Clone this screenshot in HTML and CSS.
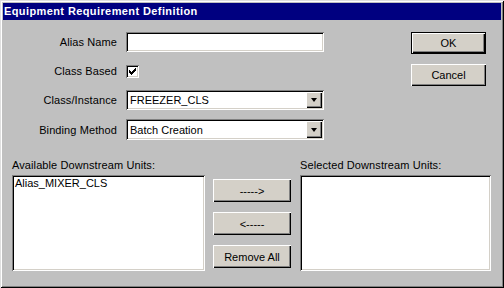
FILE: index.html
```html
<!DOCTYPE html>
<html lang="en">
<head>
  <meta charset="UTF-8" />
  <title>Equipment Requirement Definition</title>
  <link rel="stylesheet" href="styles.css">
</head>
<body>
  <div class="dialog">
    <div class="titlebar">Equipment Requirement Definition</div>

    <div class="top">
      <div class="form">
        <label class="lbl">Alias Name</label>
        <div class="field edit"></div>

        <label class="lbl">Class Based</label>
        <div class="check-cell">
          <span class="checkbox">
            <svg width="7" height="7" viewBox="0 0 7 7" shape-rendering="crispEdges"><path d="M0 2L2 4L7 -1L7 2L2 7L0 5Z" fill="#000"/></svg>
          </span>
        </div>

        <label class="lbl">Class/Instance</label>
        <div class="field combo"><span class="val">FREEZER_CLS</span><span class="drop"><i></i></span></div>

        <label class="lbl">Binding Method</label>
        <div class="field combo"><span class="val">Batch Creation</span><span class="drop"><i></i></span></div>
      </div>

      <div class="actions">
        <button class="btn default">OK</button>
        <button class="btn">Cancel</button>
      </div>
    </div>

    <div class="units">
      <div class="unit-col left">
        <div class="cap">Available Downstream Units:</div>
        <div class="list"><div class="item">Alias_MIXER_CLS</div></div>
      </div>
      <div class="move-col">
        <button class="btn small">-----&gt;</button>
        <button class="btn small">&lt;-----</button>
        <button class="btn small">Remove All</button>
      </div>
      <div class="unit-col right">
        <div class="cap">Selected Downstream Units:</div>
        <div class="list"></div>
      </div>
    </div>
  </div>
</body>
</html>
```

FILE: styles.css
```css
* {
  box-sizing: border-box;
}

body {
  margin: 0;
  font-family: "Liberation Sans", Arial, sans-serif;
  font-size: 11px;
  color: #000;
  background: #c0c0c0;
}

.dialog {
  width: 504px;
  height: 288px;
  padding: 3px;
  background: #c0c0c0;
  box-shadow: inset 1px 1px #dfdfdf, inset -1px -1px #000,
              inset 2px 2px #fff, inset -2px -2px #808080;
}

.titlebar {
  height: 17px;
  line-height: 17px;
  padding-left: 1px;
  background: #000080;
  color: #fff;
  font-weight: bold;
  font-size: 11px;
  letter-spacing: 0.4px;
}

.top {
  display: flex;
  padding: 12px 0 0 9px;
}

.form {
  display: grid;
  grid-template-columns: 105px 198px;
  grid-template-rows: 20px 20px 20px 21px;
  column-gap: 9px;
  row-gap: 9px;
  align-items: center;
}

.lbl {
  text-align: right;
  letter-spacing: 0.1px;
}

.field {
  height: 100%;
  background: #fff;
  box-shadow: inset 1px 1px #808080, inset -1px -1px #fff,
              inset 2px 2px #000, inset -2px -2px #d4d0c8;
}

.check-cell {
  display: flex;
  align-items: center;
}

.checkbox {
  width: 13px;
  height: 13px;
  display: flex;
  align-items: center;
  justify-content: center;
  background: #fff;
  box-shadow: inset 1px 1px #808080, inset -1px -1px #fff,
              inset 2px 2px #000, inset -2px -2px #d4d0c8;
}

.checkbox svg {
  display: block;
}

.combo {
  display: flex;
  align-items: center;
  padding: 2px;
}

.combo .val {
  flex: 1;
  padding-left: 2px;
}

.drop {
  width: 16px;
  height: 100%;
  display: flex;
  align-items: center;
  justify-content: center;
  background: #d4d0c8;
  box-shadow: inset 1px 1px #fff, inset -1px -1px #000, inset -2px -2px #808080;
}

.drop i {
  width: 0;
  height: 0;
  border-left: 3.5px solid transparent;
  border-right: 3.5px solid transparent;
  border-top: 4px solid #000;
}

.actions {
  display: flex;
  flex-direction: column;
  gap: 10px;
  margin-left: 87px;
}

.btn {
  width: 75px;
  height: 22px;
  padding: 0;
  border: none;
  font-family: inherit;
  font-size: 11px;
  color: #000;
  background: #d4d0c8;
  box-shadow: inset 1px 1px #fff, inset -1px -1px #000, inset -2px -2px #808080;
}

.btn.default {
  box-shadow: inset 0 0 0 1px #000, inset 2px 2px #fff,
              inset -2px -2px #000, inset -3px -3px #808080;
}

.units {
  display: flex;
  padding: 19px 0 0 9px;
}

.unit-col.left {
  width: 193px;
}

.unit-col.right {
  width: 191px;
}

.cap {
  height: 13px;
  line-height: 13px;
  margin-bottom: 3px;
  letter-spacing: 0.1px;
}

.list {
  height: 96px;
  padding: 2px 3px;
  background: #fff;
  box-shadow: inset 1px 1px #808080, inset -1px -1px #fff,
              inset 2px 2px #000, inset -2px -2px #d4d0c8;
}

.move-col {
  display: flex;
  flex-direction: column;
  gap: 10px;
  padding-top: 20px;
  margin: 0 9px 0 8px;
}

.btn.small {
  width: 78px;
  height: 23px;
}
```
